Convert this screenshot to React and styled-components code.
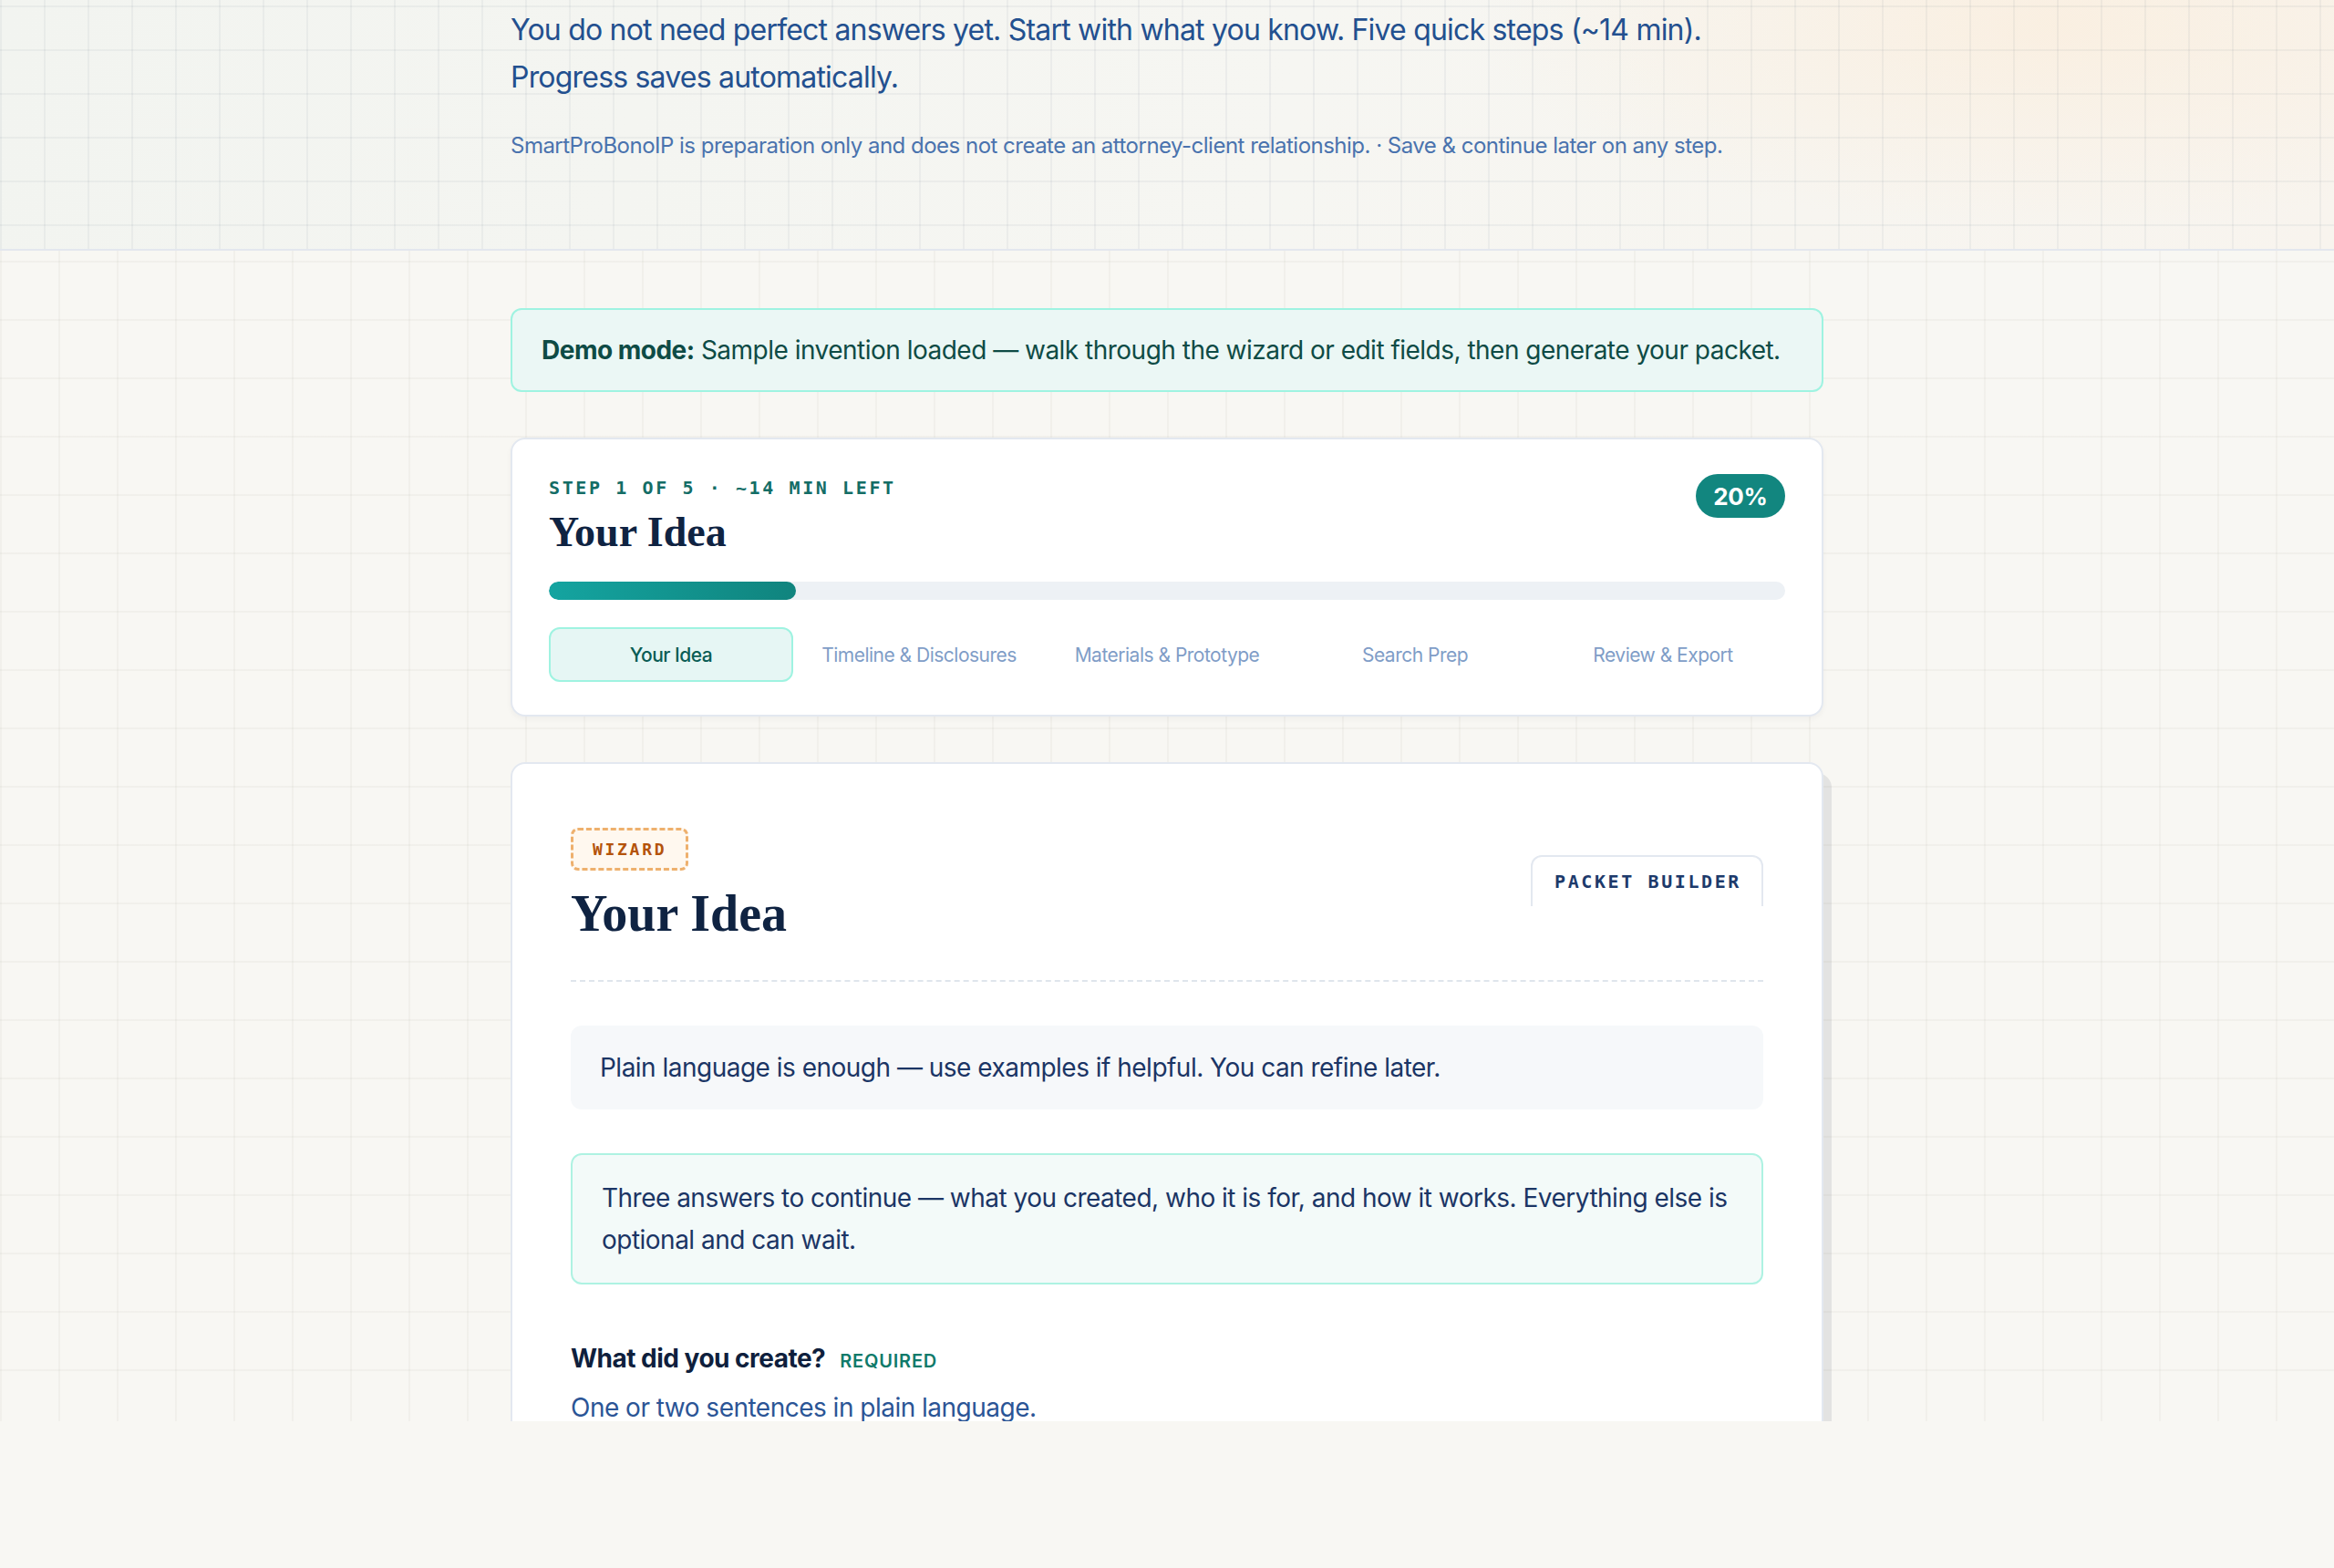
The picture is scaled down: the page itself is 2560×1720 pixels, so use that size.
import React from "react";
import styled, { createGlobalStyle } from "styled-components";

const steps = [
  "Your Idea",
  "Timeline & Disclosures",
  "Materials & Prototype",
  "Search Prep",
  "Review & Export",
];

const progress = 20;

const App = () => {
  return (
    <>
      <GlobalStyle />
      <Hero>
        <Container>
          <Lead>
            You do not need perfect answers yet. Start with what you know. Five
            quick steps (~14 min). Progress saves automatically.
          </Lead>
          <Disclaimer>
            SmartProBonoIP is preparation only and does not create an
            attorney-client relationship. · Save &amp; continue later on any
            step.
          </Disclaimer>
        </Container>
      </Hero>

      <Main>
        <Column>
          <DemoBanner>
            <strong>Demo mode:</strong> Sample invention loaded — walk through
            the wizard or edit fields, then generate your packet.
          </DemoBanner>

          <StepCard>
            <StepHeader>
              <div>
                <StepLabel>Step 1 of 5 · ~14 min left</StepLabel>
                <StepTitle>Your Idea</StepTitle>
              </div>
              <Percent>{progress}%</Percent>
            </StepHeader>
            <Track>
              <Fill style={{ width: `${progress}%` }} />
            </Track>
            <Tabs>
              {steps.map((step, i) => (
                <Tab key={step} $active={i === 0}>
                  {step}
                </Tab>
              ))}
            </Tabs>
          </StepCard>

          <WizardCard>
            <WizardHeader>
              <div>
                <WizardBadge>Wizard</WizardBadge>
                <WizardTitle>Your Idea</WizardTitle>
              </div>
              <BuilderTab>Packet Builder</BuilderTab>
            </WizardHeader>

            <Hint>
              Plain language is enough — use examples if helpful. You can
              refine later.
            </Hint>
            <Callout>
              Three answers to continue — what you created, who it is for, and
              how it works. Everything else is optional and can wait.
            </Callout>

            <Field>
              <FieldLabel>
                What did you create?
                <Required>Required</Required>
              </FieldLabel>
              <FieldHelp>One or two sentences in plain language.</FieldHelp>
            </Field>
          </WizardCard>
        </Column>
      </Main>
    </>
  );
};

export default App;

const GlobalStyle = createGlobalStyle`
  * {
    box-sizing: border-box;
  }

  body {
    margin: 0;
    background: #f8f7f3;
    font-family: Inter, "Noto Sans", sans-serif;
    letter-spacing: -0.032em;
    -webkit-font-smoothing: antialiased;
  }
`;

const Hero = styled.header`
  padding: 7px 0 93px;
  border-bottom: 2px solid #e3e7ee;
  background-color: #f4f5f1;
  background-image: linear-gradient(
      to right,
      rgba(40, 60, 90, 0.05) 2px,
      transparent 2px
    ),
    linear-gradient(to bottom, rgba(40, 60, 90, 0.05) 2px, transparent 2px),
    radial-gradient(
      ellipse 900px 320px at 88% 10%,
      rgba(250, 238, 222, 0.8),
      transparent 70%
    ),
    linear-gradient(100deg, #f2f4f0 0%, #f6f6f2 55%, #f8f4ee 100%);
  background-size: 48px 48px, 48px 48px, 100% 100%, 100% 100%;
  background-position: 0 6px, 0 6px, 0 0, 0 0;
`;

const Container = styled.div`
  width: 1440px;
  margin: 0 auto;
`;

const Lead = styled.p`
  max-width: 1360px;
  margin: 0;
  font-size: 32px;
  line-height: 52px;
  letter-spacing: -0.025em;
  color: #23508f;
`;

const Disclaimer = styled.p`
  margin: 29px 0 0;
  font-size: 24px;
  line-height: 40px;
  color: #4a73ae;
`;

const Main = styled.main`
  height: 1284px;
  overflow: hidden;
  background-color: #f8f7f3;
  background-image: linear-gradient(
      to right,
      rgba(60, 50, 30, 0.035) 2px,
      transparent 2px
    ),
    linear-gradient(to bottom, rgba(60, 50, 30, 0.035) 2px, transparent 2px);
  background-size: 64px 64px;
  background-position: 0 11px;
`;

const Column = styled.div`
  display: flex;
  flex-direction: column;
  gap: 50px;
  width: 1440px;
  margin: 0 auto;
  padding-top: 63px;
`;

const DemoBanner = styled.div`
  padding: 22px 32px;
  border: 2px solid #9ff3e1;
  border-radius: 12px;
  background: #ebf7f5;
  color: #0e4b45;
  font-size: 28px;
  line-height: 44px;

  strong {
    font-weight: 700;
  }
`;

const StepCard = styled.section`
  padding: 38px 40px 36px;
  border: 2px solid #e3e8f0;
  border-radius: 16px;
  background: #ffffff;
  box-shadow: 0 3px 6px rgba(15, 23, 42, 0.04);
`;

const StepHeader = styled.div`
  display: flex;
  justify-content: space-between;
  align-items: flex-start;
`;

const StepLabel = styled.div`
  font-family: "DejaVu Sans Mono", "Liberation Mono", monospace;
  font-size: 20px;
  font-weight: 700;
  line-height: 30px;
  letter-spacing: 0.13em;
  text-transform: uppercase;
  color: #136d66;
`;

const StepTitle = styled.h2`
  margin: 8px 0 0;
  font-family: "Liberation Serif", "DejaVu Serif", serif;
  font-size: 46px;
  font-weight: 700;
  line-height: 52px;
  letter-spacing: 0;
  color: #0f2342;
`;

const Percent = styled.span`
  display: inline-flex;
  align-items: center;
  justify-content: center;
  width: 98px;
  height: 48px;
  border-radius: 999px;
  background: #12867f;
  color: #ffffff;
  font-size: 26px;
  font-weight: 700;
  letter-spacing: -0.01em;
`;

const Track = styled.div`
  height: 20px;
  margin-top: 28px;
  border-radius: 999px;
  background: #edf1f5;
  overflow: hidden;
`;

const Fill = styled.div`
  height: 100%;
  border-radius: 999px;
  background: linear-gradient(90deg, #14a4a0, #10847e);
`;

const Tabs = styled.nav`
  display: grid;
  grid-template-columns: repeat(5, 1fr);
  gap: 4px;
  margin-top: 30px;
`;

const Tab = styled.div`
  display: flex;
  align-items: center;
  justify-content: center;
  height: 60px;
  border: 2px solid ${(props) => (props.$active ? "#9ff3e1" : "transparent")};
  border-radius: 12px;
  background: ${(props) => (props.$active ? "#e6f6f4" : "transparent")};
  color: ${(props) => (props.$active ? "#0a5d55" : "#7f9dc7")};
  font-size: 21px;
  font-weight: ${(props) => (props.$active ? 500 : 400)};
  letter-spacing: -0.024em;
`;

const WizardCard = styled.section`
  padding: 70px 64px 64px;
  border: 2px solid #e3e8f0;
  border-radius: 16px;
  background: #ffffff;
  box-shadow: 9px 12px 0 rgba(20, 30, 50, 0.09);
`;

const WizardHeader = styled.div`
  display: flex;
  justify-content: space-between;
  align-items: center;
  padding-bottom: 42px;
  border-bottom: 2px dashed #dfe5ec;
`;

const WizardBadge = styled.span`
  display: inline-flex;
  align-items: center;
  height: 47px;
  padding: 0 21px;
  border: 3px dashed #eeb06d;
  border-radius: 8px;
  background: #fff8ef;
  color: #b4530a;
  font-family: "DejaVu Sans Mono", "Liberation Mono", monospace;
  font-size: 18px;
  font-weight: 700;
  letter-spacing: 0.15em;
  text-transform: uppercase;
`;

const WizardTitle = styled.h1`
  margin: 16px 0 0;
  font-family: "Liberation Serif", "DejaVu Serif", serif;
  font-size: 56px;
  font-weight: 700;
  line-height: 62px;
  letter-spacing: 0;
  color: #0f2342;
`;

const BuilderTab = styled.div`
  margin-top: -10px;
  padding: 14px 22px 14px 24px;
  border: 2px solid #e3e8f0;
  border-bottom: none;
  border-radius: 12px 12px 0 0;
  color: #1d3a6b;
  font-family: "DejaVu Sans Mono", "Liberation Mono", monospace;
  font-size: 20px;
  font-weight: 700;
  line-height: 26px;
  letter-spacing: 0.13em;
  text-transform: uppercase;
`;

const Hint = styled.p`
  margin: 48px 0 0;
  padding: 23px 32px;
  border-radius: 12px;
  background: #f6f8fa;
  color: #1b3565;
  font-size: 28px;
  line-height: 46px;
`;

const Callout = styled.p`
  margin: 48px 0 0;
  padding: 24px 32px;
  border: 2px solid #aef2e2;
  border-radius: 12px;
  background: #f3faf9;
  color: #1b3565;
  font-size: 28px;
  line-height: 46px;
`;

const Field = styled.div`
  margin-top: 61px;
`;

const FieldLabel = styled.label`
  display: flex;
  align-items: baseline;
  gap: 16px;
  color: #0f1f3d;
  font-size: 28px;
  font-weight: 700;
  line-height: 40px;
`;

const Required = styled.span`
  color: #0f7a6a;
  font-size: 20px;
  font-weight: 600;
  letter-spacing: 0.04em;
  text-transform: uppercase;
`;

const FieldHelp = styled.p`
  margin: 11px 0 0;
  color: #2b5596;
  font-size: 28px;
  line-height: 40px;
`;
